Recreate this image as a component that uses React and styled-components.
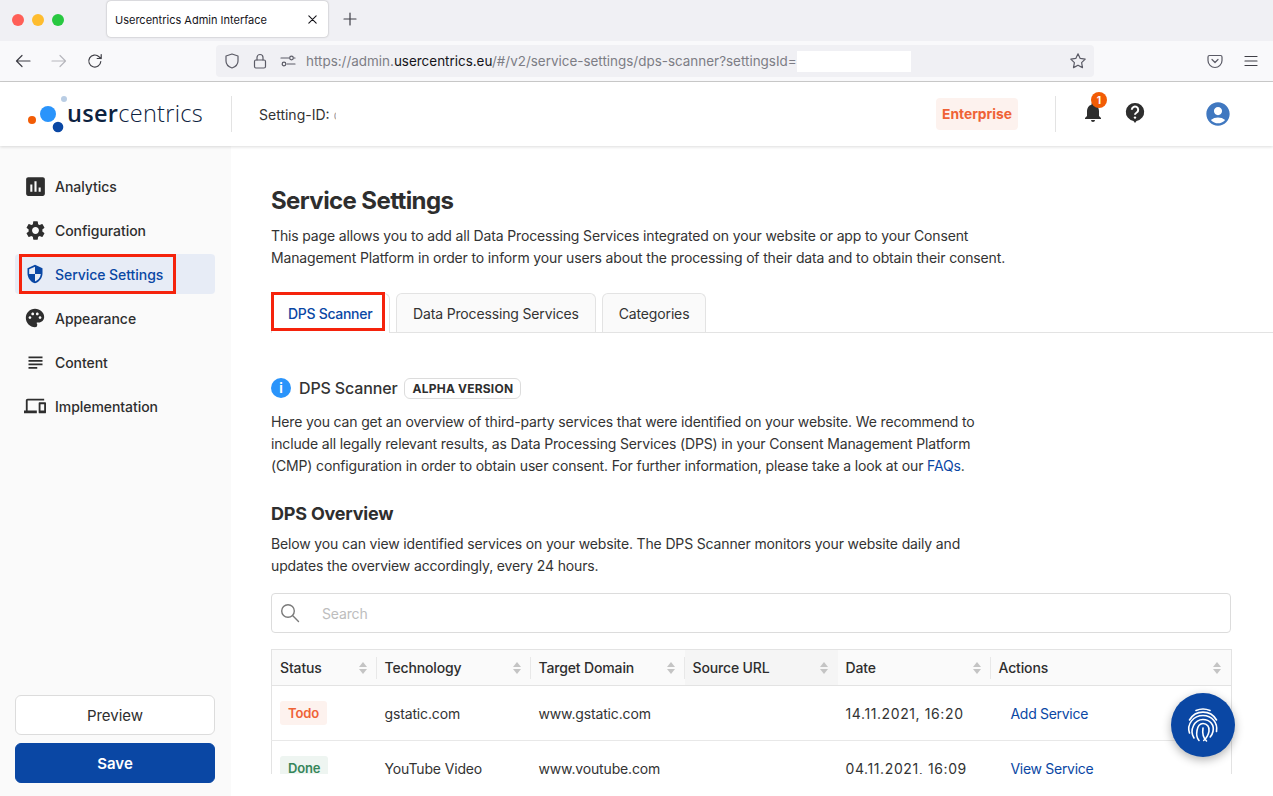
import React from 'react'
import styled, { createGlobalStyle } from 'styled-components'
import { MdAssessment, MdPalette, MdSecurity, MdDevices, MdSettings, MdNotifications, MdSubject, MdAccountCircle } from 'react-icons/md'

const GlobalStyle = createGlobalStyle`
    html, body, #root {
        margin: 0;
        height: 100%;
        overflow: hidden;
    }
    body {
        font-family: Inter, "Liberation Sans", sans-serif;
        font-size: 14px;
        color: #2e2e2e;
        background: #fff;
    }
`

const Window = styled.div`
    height: 796px;
    display: flex;
    flex-direction: column;
`

const TabStrip = styled.div`
    height: 41px;
    flex-shrink: 0;
    background: #f0f0f4;
    display: flex;
    align-items: flex-start;
`

const Lights = styled.div`
    width: 107px;
    height: 40px;
    padding-left: 12px;
    box-sizing: border-box;
    display: flex;
    align-items: center;
    gap: 8px;
`

const Light = styled.span`
    width: 12px;
    height: 12px;
    border-radius: 50%;
    background: ${(p) => p.$color};
`

const BrowserTab = styled.div`
    width: 221px;
    height: 36px;
    margin-top: 1px;
    padding: 1px 10px 0 8px;
    box-sizing: border-box;
    background: #fff;
    border-radius: 4px;
    box-shadow: 0 0 2px rgba(0, 0, 0, 0.35);
    display: flex;
    align-items: center;
    justify-content: space-between;
    font-size: 11px;
    color: #15141a;
`

const NewTab = styled.div`
    width: 44px;
    height: 38px;
    display: flex;
    align-items: center;
    justify-content: center;
`

const Toolbar = styled.div`
    height: 40px;
    flex-shrink: 0;
    background: #f9f9fb;
    border-bottom: 1px solid #ccc;
    display: flex;
    align-items: center;
`

const NavButtons = styled.div`
    width: 216px;
    padding-left: 15px;
    box-sizing: border-box;
    display: flex;
    gap: 20px;
    align-items: center;
`

const UrlBar = styled.div`
    width: 878px;
    height: 32px;
    padding: 0 7px 0 8px;
    box-sizing: border-box;
    background: #f0f0f4;
    border-radius: 4px;
    display: flex;
    align-items: center;
    font-size: 13.45px;
    color: #7d7d85;
`

const UrlIcons = styled.div`
    width: 82px;
    display: flex;
    gap: 12px;
    align-items: center;
`

const UrlText = styled.span`
    white-space: pre;
    b {
        font-weight: 400;
        color: #15141a;
    }
`

const UrlMask = styled.span`
    width: 114px;
    height: 21px;
    margin-right: auto;
    background: #fff;
`

const ToolbarRight = styled.div`
    flex: 1;
    padding: 0 14px 0 113px;
    display: flex;
    align-items: center;
    justify-content: space-between;
`

const Header = styled.header`
    height: 64px;
    flex-shrink: 0;
    background: #fff;
    box-shadow: 0 1px 3px rgba(0, 0, 0, 0.14);
    display: flex;
    align-items: center;
    position: relative;
    z-index: 2;
`

const LogoBox = styled.div`
    width: 232px;
    height: 36px;
    padding-left: 27px;
    box-sizing: border-box;
    border-right: 1px solid #e3e3e3;
    display: flex;
    align-items: center;
`

const LogoText = styled.span`
    margin: -3px 0 0 -2px;
    font-family: "Open Sans", sans-serif;
    font-size: 23.5px;
    font-weight: 300;
    letter-spacing: 0.3px;
    color: #0d2240;
    b {
        font-weight: 600;
    }
`

const SettingId = styled.div`
    margin-left: 27px;
    color: #333;
    flex: 1;
    display: flex;
    gap: 4px;
`

const ClippedId = styled.span`
    width: 2px;
    overflow: hidden;
    color: #aaa;
`

const Enterprise = styled.div`
    width: 82px;
    height: 32px;
    background: #fdf2ee;
    border-radius: 4px;
    color: #ef6236;
    font-size: 13.8px;
    font-weight: 700;
    display: flex;
    align-items: center;
    justify-content: center;
`

const HeaderTools = styled.div`
    width: 218px;
    height: 36px;
    margin-left: 37px;
    border-left: 1px solid #e3e3e3;
    box-sizing: border-box;
    display: flex;
    align-items: center;
    color: #2e2e2e;
`

const BellWrap = styled.div`
    width: 24px;
    height: 24px;
    margin: -5px 0 0 25px;
    position: relative;
`

const Count = styled.span`
    position: absolute;
    left: 10px;
    top: -8px;
    width: 16px;
    height: 16px;
    border-radius: 50%;
    background: #f25c05;
    color: #fff;
    font-size: 10px;
    font-weight: 700;
    display: flex;
    align-items: center;
    justify-content: center;
`

const HelpWrap = styled.div`
    margin: -3px 0 0 20px;
    display: flex;
`

const AvatarWrap = styled.div`
    margin-left: 59px;
    display: flex;
    color: #4078c0;
`

const Body = styled.div`
    flex: 1;
    display: flex;
    min-height: 0;
`

const Sidebar = styled.aside`
    width: 231px;
    flex-shrink: 0;
    padding: 20px 16px 13px 15px;
    box-sizing: border-box;
    background: #fafafa;
    display: flex;
    flex-direction: column;
`

const NavList = styled.nav`
    flex: 1;
    display: flex;
    flex-direction: column;
    gap: 4px;
`

const NavItem = styled.div`
    height: 40px;
    padding-left: 10px;
    border-radius: 4px;
    display: flex;
    align-items: center;
    gap: 10px;
    position: relative;
    background: ${(p) => (p.$active ? '#e7ecf6' : 'transparent')};
    color: ${(p) => (p.$active ? '#0a47a4' : '#2e2e2e')};
    font-weight: 500;
    letter-spacing: -0.05px;
`

const IconSlot = styled.span`
    width: 20px;
    display: flex;
    justify-content: center;
    svg {
        flex-shrink: 0;
    }
`

const Highlight = styled.span`
    position: absolute;
    box-sizing: border-box;
    border: 3px solid #f5230c;
    pointer-events: none;
`

const NavHighlight = styled(Highlight)`
    left: 4px;
    top: 0;
    width: 157px;
    height: 40px;
`

const Button = styled.button`
    height: 40px;
    border-radius: 6px;
    font-family: inherit;
    font-size: 15px;
    font-weight: ${(p) => (p.$primary ? 600 : 400)};
    color: ${(p) => (p.$primary ? '#fff' : '#2e2e2e')};
    background: ${(p) => (p.$primary ? '#0a47a4' : '#fff')};
    border: 1px solid ${(p) => (p.$primary ? '#0a47a4' : '#dcdcdc')};
    margin-top: ${(p) => (p.$primary ? '8px' : '0')};
`

const Viewport = styled.div`
    flex: 1;
    height: 628px;
    overflow: hidden;
    position: relative;
    background: #fff;
    letter-spacing: -0.15px;
`

const Main = styled.main`
    padding: 39px 0 0 40px;
`

const Title = styled.h1`
    margin: 0 0 8px;
    font-size: 24px;
    line-height: 32px;
    font-weight: 700;
    letter-spacing: -0.6px;
    color: #2e2e2e;
`

const Paragraph = styled.p`
    margin: 0;
    width: ${(p) => p.$width || '720px'};
    line-height: 22px;
    color: #333;
    a {
        color: #0a47a4;
        text-decoration: none;
    }
`

const Tabs = styled.div`
    margin-top: 24px;
    height: 39px;
    border-bottom: 1px solid #e3e3e3;
    display: flex;
    align-items: flex-start;
    gap: 6px;
`

const Tab = styled.div`
    height: ${(p) => (p.$active ? '40px' : '39px')};
    width: ${(p) => (p.$active ? '119px' : 'auto')};
    padding: 0 16px;
    box-sizing: border-box;
    position: relative;
    border: 1px solid #e3e3e3;
    border-bottom: 0;
    border-radius: 6px 6px 0 0;
    display: flex;
    align-items: center;
    font-weight: ${(p) => (p.$active ? 500 : 400)};
    letter-spacing: ${(p) => (p.$active ? '-0.3px' : '-0.15px')};
    color: ${(p) => (p.$active ? '#0a47a4' : '#333')};
    background: ${(p) => (p.$active ? '#fff' : '#fafafa')};
`

const TabHighlight = styled(Highlight)`
    left: -1px;
    top: -2px;
    width: 114px;
    height: 39px;
`

const InfoRow = styled.div`
    margin-top: 44px;
    height: 22px;
    display: flex;
    align-items: center;
`

const InfoDot = styled.span`
    width: 20px;
    height: 20px;
    border-radius: 50%;
    background: #2a94fb;
    color: #fff;
    font-size: 13px;
    font-weight: 700;
    display: flex;
    align-items: center;
    justify-content: center;
`

const InfoTitle = styled.span`
    margin-left: 8px;
    font-size: 16px;
    font-weight: 500;
    color: #333;
`

const Tag = styled.span`
    margin-left: 7px;
    width: 117px;
    height: 21px;
    box-sizing: border-box;
    border: 1px solid #dcdcdc;
    border-radius: 6px;
    font-size: 12px;
    font-weight: 700;
    display: flex;
    align-items: center;
    justify-content: center;
    letter-spacing: 0.2px;
`

const InfoText = styled(Paragraph)`
    margin-top: 12px;
`

const SubTitle = styled.h2`
    margin: 25px 0 7px;
    font-size: 18px;
    line-height: 24px;
    font-weight: 700;
    letter-spacing: -0.2px;
    color: #2e2e2e;
`

const SearchBox = styled.div`
    margin-top: 16px;
    width: 960px;
    height: 40px;
    box-sizing: border-box;
    border: 1px solid #dcdcdc;
    border-radius: 4px;
    padding-left: 8px;
    display: flex;
    align-items: center;
    gap: 22px;
    color: #bdbdbd;
`

const Table = styled.table`
    margin-top: 16px;
    width: 960px;
    table-layout: fixed;
    border-collapse: collapse;
    border: 1px solid #e3e3e3;
`

const Th = styled.th`
    width: ${(p) => p.$width}px;
    height: 36px;
    padding: 0 10px 0 8px;
    box-sizing: border-box;
    text-align: left;
    font-weight: 500;
    color: #2e2e2e;
    background: ${(p) => (p.$sorted ? '#f5f5f5' : '#fafafa')};
    border-bottom: 1px solid #e3e3e3;
`

const ThInner = styled.div`
    display: flex;
    align-items: center;
    justify-content: space-between;
    position: relative;
    &::before {
        content: '';
        display: ${(p) => (p.$divider ? 'block' : 'none')};
        position: absolute;
        left: -9px;
        top: -2px;
        height: 22px;
        width: 1px;
        background: #e8e8e8;
    }
`

const SortIcon = styled.svg`
    width: 8px;
    height: 12px;
    fill: #c4c4c4;
    flex-shrink: 0;
`

const Td = styled.td`
    height: 54px;
    padding: 0 8px;
    color: #333;
    border-bottom: 1px solid #e8e8e8;
`

const DateCell = styled(Td)`
    letter-spacing: 0.6px;
`

const Status = styled.span`
    display: inline-flex;
    align-items: center;
    height: 24px;
    padding: 0 8px;
    border-radius: 3px;
    font-weight: 600;
    font-size: 13px;
    color: ${(p) => (p.$done ? '#36865a' : '#ef6236')};
    background: ${(p) => (p.$done ? '#eef5f1' : '#fdf2ee')};
`

const ActionLink = styled.a`
    margin-left: 12px;
    letter-spacing: -0.3px;
    color: #0a47a4;
`

const Fab = styled.div`
    position: absolute;
    left: 940px;
    top: 547px;
    width: 64px;
    height: 64px;
    border-radius: 50%;
    background: #0a47a4;
    box-shadow: 0 3px 10px rgba(0, 0, 0, 0.3);
    display: flex;
    align-items: center;
    justify-content: center;
`

const Stroke = styled.svg`
    width: ${(p) => p.$size || 16}px;
    height: ${(p) => p.$size || 16}px;
    fill: none;
    stroke: ${(p) => p.$color || '#5b5b66'};
    stroke-width: ${(p) => p.$weight || 1.2};
    stroke-linecap: round;
    stroke-linejoin: round;
    flex-shrink: 0;
`

const Sort = () => (
    <SortIcon viewBox="0 0 8 12">
        <path d="M4 0l4 5H0zM4 12L0 7h8z" />
    </SortIcon>
)

const LogoDots = () => (
    <svg width="42" height="40" viewBox="0 0 42 40">
        <circle cx="5" cy="26" r="4" fill="#f25c05" />
        <circle cx="21" cy="20" r="8" fill="#2a94fb" />
        <circle cx="31" cy="33" r="5.300" fill="#0a47a4" />
        <circle cx="37" cy="5" r="3" fill="#b9cde4" />
    </svg>
)

const HelpIcon = () => (
    <svg width="20" height="22" viewBox="0 0 20 22">
        <path d="M10 1a9 9 0 0 1 1.500 17.900L10 21l-1.500-2.100A9 9 0 0 1 10 1z" fill="#2e2e2e" />
        <path d="M6.800 7.800a3.200 3.200 0 1 1 4.900 2.700c-1.100.7-1.700 1.200-1.700 2.300" fill="none" stroke="#fff" strokeWidth="2" />
        <circle cx="10" cy="15.600" r="1.200" fill="#fff" />
    </svg>
)

const FingerprintIcon = () => (
    <Stroke $size={36} $color="#fff" $weight={1.6} viewBox="0 0 36 36">
        <path d="M11 3.500Q18 .5 25 3.500" />
        <path d="M4.500 13A15.500 15.500 0 0 1 31.500 13" />
        <path d="M4.500 26C1.500 17 8.500 8.500 18 8.500c9 0 15 7.500 13.500 16" />
        <path d="M9 31C4 23 9.500 12.500 18 12.500c7 0 11.500 5.500 10 12-.5 2.200-1.500 4-2.800 5.500" />
        <path d="M14 33.500C11 30 11.500 26 12 23.500 12.800 19 15 16.500 18 16.500c4 0 6.800 3.500 6 7.800-.7 3.500-2.500 6.700-5.300 9.200" />
        <path d="M18 21c-.8 5-.2 9.500 3.500 13" />
    </Stroke>
)

const navItems = [
    { label: 'Analytics', Icon: MdAssessment, size: 25 },
    { label: 'Configuration', Icon: MdSettings, size: 23 },
    { label: 'Service Settings', Icon: MdSecurity, size: 20, active: true },
    { label: 'Appearance', Icon: MdPalette, size: 22 },
    { label: 'Content', Icon: MdSubject, size: 21 },
    { label: 'Implementation', Icon: MdDevices, size: 22 },
]

const columns = [
    { label: 'Status', width: 105 },
    { label: 'Technology', width: 154, divider: true },
    { label: 'Target Domain', width: 154, divider: true },
    { label: 'Source URL', width: 153, sorted: true, divider: true },
    { label: 'Date', width: 153 },
    { label: 'Actions', width: 241, divider: true },
]

const rows = [
    { status: 'Todo', tech: 'gstatic.com', domain: 'www.gstatic.com', date: '14.11.2021, 16:20', action: 'Add Service' },
    { status: 'Done', tech: 'YouTube Video', domain: 'www.youtube.com', date: '04.11.2021, 16:09', action: 'View Service', done: true },
]

const App = () => (
    <Window>
        <GlobalStyle />
        <TabStrip>
            <Lights>
                <Light $color="#ff5f57" />
                <Light $color="#febc2e" />
                <Light $color="#28c840" />
            </Lights>
            <BrowserTab>
                Usercentrics Admin Interface
                <Stroke $size={11} $color="#15141a" viewBox="0 0 12 12">
                    <path d="M2 2l8 8M10 2l-8 8" />
                </Stroke>
            </BrowserTab>
            <NewTab>
                <Stroke $size={14} $color="#3f3f46" viewBox="0 0 14 14">
                    <path d="M7 1v12M1 7h12" />
                </Stroke>
            </NewTab>
        </TabStrip>
        <Toolbar>
            <NavButtons>
                <Stroke $color="#3f3f46" viewBox="0 0 16 16">
                    <path d="M15 8H1.500M7 2.500L1.500 8 7 13.500" />
                </Stroke>
                <Stroke viewBox="0 0 16 16" $color="#b8b8bd">
                    <path d="M1 8h13.500M9 2.500L14.500 8 9 13.500" />
                </Stroke>
                <Stroke $color="#3f3f46" viewBox="0 0 16 16">
                    <path d="M13.800 8.500A6 6 0 1 1 12 3.700L14 5.500M14.200 1.500v4h-4" />
                </Stroke>
            </NavButtons>
            <UrlBar>
                <UrlIcons>
                    <Stroke viewBox="0 0 16 16">
                        <path d="M8 1l6 2v5c0 3.500-2.500 5.800-6 7-3.500-1.200-6-3.500-6-7V3z" />
                    </Stroke>
                    <Stroke viewBox="0 0 16 16">
                        <rect x="2.500" y="7" width="11" height="8" rx="1.500" />
                        <path d="M5 7V4.500a3 3 0 0 1 6 0V7" />
                    </Stroke>
                    <Stroke viewBox="0 0 16 16">
                        <circle cx="11.500" cy="5" r="1.800" />
                        <circle cx="4" cy="11" r="1.800" />
                        <path d="M1 5h8M14 5h1M7 11h8" />
                    </Stroke>
                </UrlIcons>
                <UrlText>
                    https://admin.<b>usercentrics.eu</b>/#/v2/service-settings/dps-scanner?settingsId=
                </UrlText>
                <UrlMask />
                <Stroke $size={18} viewBox="0 0 18 18">
                    <path d="M9 1.800l2.200 4.600 5 .7-3.600 3.500.9 5L9 13.200l-4.500 2.400.9-5L1.800 7.100l5-.7z" />
                </Stroke>
            </UrlBar>
            <ToolbarRight>
                <Stroke viewBox="0 0 16 16">
                    <path d="M2.500 2.500h11A1.500 1.500 0 0 1 15 4v3.500a7 7 0 0 1-14 0V4a1.500 1.500 0 0 1 1.500-1.500z" />
                    <path d="M5 6.500L8 9.500l3-3" />
                </Stroke>
                <Stroke viewBox="0 0 16 16" $color="#3f3f46">
                    <path d="M2 3.500h12M2 8h12M2 12.500h12" />
                </Stroke>
            </ToolbarRight>
        </Toolbar>
        <Header>
            <LogoBox>
                <LogoDots />
                <LogoText>
                    <b>user</b>centrics
                </LogoText>
            </LogoBox>
            <SettingId>
                Setting-ID:
                <ClippedId>c</ClippedId>
            </SettingId>
            <Enterprise>Enterprise</Enterprise>
            <HeaderTools>
                <BellWrap>
                    <MdNotifications size={24} />
                    <Count>1</Count>
                </BellWrap>
                <HelpWrap>
                    <HelpIcon />
                </HelpWrap>
                <AvatarWrap>
                    <MdAccountCircle size={28} />
                </AvatarWrap>
            </HeaderTools>
        </Header>
        <Body>
            <Sidebar>
                <NavList>
                    {navItems.map(({ label, Icon, size, active }) => (
                        <NavItem key={label} $active={active}>
                            <IconSlot>
                                <Icon size={size} />
                            </IconSlot>
                            {label}
                            {active && <NavHighlight />}
                        </NavItem>
                    ))}
                </NavList>
                <Button>Preview</Button>
                <Button $primary>Save</Button>
            </Sidebar>
            <Viewport>
                <Main>
                    <Title>Service Settings</Title>
                    <Paragraph $width="750px">
                        This page allows you to add all Data Processing Services integrated on your website or app to your Consent
                        Management Platform in order to inform your users about the processing of their data and to obtain their consent.
                    </Paragraph>
                    <Tabs>
                        <Tab $active>
                            DPS Scanner
                            <TabHighlight />
                        </Tab>
                        <Tab>Data Processing Services</Tab>
                        <Tab>Categories</Tab>
                    </Tabs>
                    <InfoRow>
                        <InfoDot>i</InfoDot>
                        <InfoTitle>DPS Scanner</InfoTitle>
                        <Tag>ALPHA VERSION</Tag>
                    </InfoRow>
                    <InfoText>
                        Here you can get an overview of third-party services that were identified on your website. We recommend to
                        include all legally relevant results, as Data Processing Services (DPS) in your Consent Management Platform
                        (CMP) configuration in order to obtain user consent. For further information, please take a look at our <a href="#faq">FAQs</a>.
                    </InfoText>
                    <SubTitle>DPS Overview</SubTitle>
                    <Paragraph>
                        Below you can view identified services on your website. The DPS Scanner monitors your website daily and
                        updates the overview accordingly, every 24 hours.
                    </Paragraph>
                    <SearchBox>
                        <Stroke $size={20} $color="#7a7a7a" $weight={1.4} viewBox="0 0 20 20">
                            <circle cx="8" cy="8" r="6.300" />
                            <path d="M12.800 12.800L18.500 18.500" />
                        </Stroke>
                        Search
                    </SearchBox>
                    <Table>
                        <thead>
                            <tr>
                                {columns.map((col) => (
                                    <Th key={col.label} $width={col.width} $sorted={col.sorted}>
                                        <ThInner $divider={col.divider}>
                                            {col.label}
                                            <Sort />
                                        </ThInner>
                                    </Th>
                                ))}
                            </tr>
                        </thead>
                        <tbody>
                            {rows.map((row) => (
                                <tr key={row.tech}>
                                    <Td>
                                        <Status $done={row.done}>{row.status}</Status>
                                    </Td>
                                    <Td>{row.tech}</Td>
                                    <Td>{row.domain}</Td>
                                    <Td />
                                    <DateCell>{row.date}</DateCell>
                                    <Td>
                                        <ActionLink>{row.action}</ActionLink>
                                    </Td>
                                </tr>
                            ))}
                        </tbody>
                    </Table>
                </Main>
                <Fab>
                    <FingerprintIcon />
                </Fab>
            </Viewport>
        </Body>
    </Window>
)

export default App
